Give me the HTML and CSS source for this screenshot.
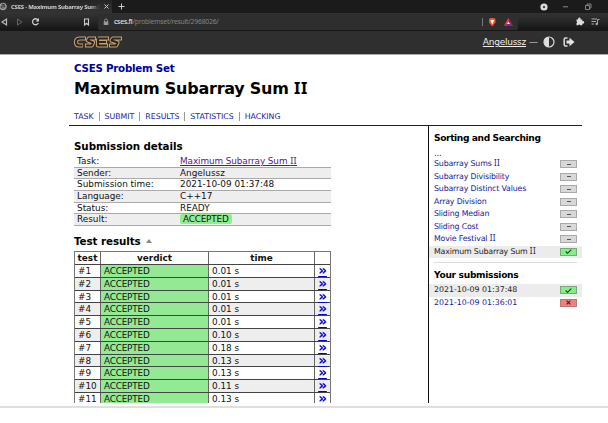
FILE: index.html
```
<!DOCTYPE html>
<html lang="en">
<head>
<meta charset="utf-8">
<title>CSES - Maximum Subarray Sum II</title>
<link rel="stylesheet" href="styles.css">
</head>
<body>
<div class="tabs">
  <div class="tab">
    <svg class="globe" width="8" height="9" viewBox="0 0 8 9"><circle cx="3" cy="4.5" r="3.3" fill="#777" stroke="#aaa"/><path d="M1 6L3 3.500L5 5M2 2L5 3" stroke="#333" fill="none"/></svg>
    <span class="tab-title">CSES - Maximum Subarray Sum I</span>
    <svg width="5" height="5" viewBox="0 0 5 5"><path d="M.5 .5L4.500 4.500M4.500 .5L.5 4.500" stroke="#ccc"/></svg>
  </div>
  <svg class="plus" width="7" height="7" viewBox="0 0 7 7"><path d="M3.500 .5V6.500M.5 3.500H6.500" stroke="#ccc"/></svg>
  <svg class="window" width="72" height="12" viewBox="0 0 72 12"><circle cx="8" cy="6" r="3.600" fill="#ddd"/><circle cx="8" cy="6" r="1.200" fill="#444"/><path d="M27 5.800H32" stroke="#888"/><path d="M49.500 4.500H53.500V8.500H49.500ZM51 4.500V3H55V7H53.500" fill="none" stroke="#999" stroke-width=".8"/></svg>
</div>
<div class="toolbar">
  <svg class="navicons" width="98" height="18" viewBox="0 0 98 18"><path d="M6.500 6V12L2 9Z" fill="none" stroke="#bbb" stroke-width="1.200"/><path d="M17.500 6V12L22 9Z" fill="none" stroke="#666"/><path d="M38 7A3 3 0 1 0 38.300 10" fill="none" stroke="#ccc" stroke-width="1.300"/><path d="M39 5V8.500H35.500Z" fill="#ccc"/><path d="M84.500 6H88.500V12L86.500 10.300L84.500 12Z" fill="none" stroke="#ccc" stroke-width="1.100"/></svg>
  <div class="address">
    <svg width="6" height="8" viewBox="0 0 6 8"><path d="M1.500 4V2.500A1.500 1.500 0 0 1 4.500 2.500V4" stroke="#888" fill="none"/><path d="M.7 3.500H5.300V7H.7Z" fill="#999"/></svg>
    <span class="url"><b>cses.fi</b>/problemset/result/2968026/</span>
    <svg class="shields" width="36" height="16" viewBox="0 0 36 16"><path d="M.500 4V12" stroke="#777"/><path d="M7 5L8.500 4H12L13.500 5V8.500L10.200 12.500L7 8.500Z" fill="#f05423"/><path d="M8.300 6.300L10.200 5.800L12.200 6.300L10.200 10.500Z" fill="#fff"/><path d="M26.500 4L31 12H22Z" fill="#b71b65"/><path d="M26.500 4V9L22 12Z" fill="#ff4724"/><path d="M22 12L26.500 9L31 12Z" fill="#68358e"/><path d="M26.500 8L28 10H25Z" fill="#fff"/></svg>
  </div>
  <svg class="exts" width="36" height="18" viewBox="0 0 36 18"><path d="M4.500 6.500H6.200A1.300 1.300 0 1 1 8.500 6.500H10.300V8.200A1.300 1.300 0 1 1 10.300 10.500V12.200H8.300A1.100 1.100 0 0 0 6.200 12.200H4.500V10.300A1.100 1.100 0 0 0 4.500 8.300Z" fill="#ddd"/><path d="M19.500 6H25M19.500 8.500H24M19.500 11H22" stroke="#aaa"/><path d="M25.500 11V6.500H27.500" stroke="#aaa" fill="none"/><circle cx="24.700" cy="11" r="1.200" fill="#aaa"/></svg>
</div>
<header class="site">
  <svg class="logo" width="50" height="14" viewBox="0 0 50 14"><g fill="none" stroke-linejoin="round"><g stroke="#c9a070" stroke-width="4.200"><path d="M13 3.500H7Q3 3.500 3 7Q3 10.500 6 10.500H10"/><path d="M23 3.500H16L15 5.500L20 7.500L18.500 10.500H12"/><path d="M36 3.500H25M34 7H25.500M35 10.500H25V3.500"/><path d="M49 3.500H40L38.500 5.500L44.500 7.500L43 10.500H36"/></g><g stroke="#2a2622" stroke-width="2.100"><path d="M12 3.500H7Q3 3.500 3 7Q3 10.500 6 10.500H9.500"/><path d="M22 3.500H16L15 5.500L20 7.500L18.500 10.500H13"/><path d="M35 3.500H25M33 7H25.500M34 10.500H25V3.500"/><path d="M48 3.500H40L38.500 5.500L44.500 7.500L43 10.500H37"/></g></g></svg>
  <div class="account"><a class="user">Angelussz</a><span class="dash">—</span>
    <svg width="12" height="12" viewBox="0 0 12 12"><circle cx="6" cy="6" r="5" fill="none" stroke="#ddd" stroke-width="1.200"/><path d="M6 1A5 5 0 0 0 6 11Z" fill="#ddd"/></svg>
    <svg class="exit" width="12" height="12" viewBox="0 0 12 12"><path d="M4.500 2H2.500Q1.200 2 1.200 3.500V8.500Q1.200 10 2.500 10H4.500" fill="none" stroke="#ddd" stroke-width="1.500"/><path d="M3.500 4.500H6.500V1.700L11.500 6L6.500 10.300V7.500H3.500Z" fill="#e4e4e4"/></svg>
  </div>
</header>
<div class="page">
  <div class="titles">
    <div class="set">CSES Problem Set</div>
    <h1>Maximum Subarray Sum <span class="numeral">II</span></h1>
    <nav><a>TASK</a><a>SUBMIT</a><a>RESULTS</a><a>STATISTICS</a><a>HACKING</a></nav>
  </div>
  <div class="columns">
    <main>
      <h2>Submission details</h2>
      <dl class="details">
        <dt>Task:</dt><dd><a class="visited">Maximum Subarray Sum <span class="numeral">II</span></a></dd>
        <dt>Sender:</dt><dd>Angelussz</dd>
        <dt>Submission time:</dt><dd>2021-10-09 01:37:48</dd>
        <dt>Language:</dt><dd>C++17</dd>
        <dt>Status:</dt><dd>READY</dd>
        <dt>Result:</dt><dd><span class="badge">ACCEPTED</span></dd>
      </dl>
      <h2 class="results-title">Test results <svg width="6" height="4" viewBox="0 0 6 4"><path d="M3 0L6 4H0Z" fill="#888"/></svg></h2>
      <div class="results">
        <div class="row head"><b>test</b><b>verdict</b><b>time</b><b></b></div>
        <div class="row"><span>#1</span><span class="ok">ACCEPTED</span><span>0.01 s</span><a>»</a></div>
        <div class="row"><span>#2</span><span class="ok">ACCEPTED</span><span>0.01 s</span><a>»</a></div>
        <div class="row"><span>#3</span><span class="ok">ACCEPTED</span><span>0.01 s</span><a>»</a></div>
        <div class="row"><span>#4</span><span class="ok">ACCEPTED</span><span>0.01 s</span><a>»</a></div>
        <div class="row"><span>#5</span><span class="ok">ACCEPTED</span><span>0.01 s</span><a>»</a></div>
        <div class="row"><span>#6</span><span class="ok">ACCEPTED</span><span>0.10 s</span><a>»</a></div>
        <div class="row"><span>#7</span><span class="ok">ACCEPTED</span><span>0.18 s</span><a>»</a></div>
        <div class="row"><span>#8</span><span class="ok">ACCEPTED</span><span>0.13 s</span><a>»</a></div>
        <div class="row"><span>#9</span><span class="ok">ACCEPTED</span><span>0.13 s</span><a>»</a></div>
        <div class="row"><span>#10</span><span class="ok">ACCEPTED</span><span>0.11 s</span><a>»</a></div>
        <div class="row"><span>#11</span><span class="ok">ACCEPTED</span><span>0.13 s</span><a>»</a></div>
      </div>
    </main>
    <aside>
      <h3>Sorting and Searching</h3>
      <div class="more">...</div>
      <div class="item"><a>Subarray Sums <span class="numeral">II</span></a><i class="mark"></i></div>
      <div class="item"><a>Subarray Divisibility</a><i class="mark"></i></div>
      <div class="item"><a>Subarray Distinct Values</a><i class="mark"></i></div>
      <div class="item"><a>Array Division</a><i class="mark"></i></div>
      <div class="item"><a>Sliding Median</a><i class="mark"></i></div>
      <div class="item"><a>Sliding Cost</a><i class="mark"></i></div>
      <div class="item"><a>Movie Festival <span class="numeral">II</span></a><i class="mark"></i></div>
      <div class="item current"><a>Maximum Subarray Sum <span class="numeral">II</span></a><i class="mark full"><svg width="7" height="5" viewBox="0 0 7 5"><path d="M.7 2.500L2.500 4.300L6.300 .6" fill="none" stroke="#174417" stroke-width="1.100"/></svg></i></div>
      <div class="rule"></div>
      <h3 class="yours">Your submissions</h3>
      <div class="item date current"><a>2021-10-09 01:37:48</a><i class="mark full"><svg width="7" height="5" viewBox="0 0 7 5"><path d="M.7 2.500L2.500 4.300L6.300 .6" fill="none" stroke="#174417" stroke-width="1.100"/></svg></i></div>
      <div class="item date"><a>2021-10-09 01:36:01</a><i class="mark zero"><svg width="5" height="5" viewBox="0 0 5 5"><path d="M.6 .6L4.400 4.400M4.400 .6L.6 4.400" stroke="#5c1515" stroke-width="1.100"/></svg></i></div>
    </aside>
  </div>
</div>
<div class="frame-edge"></div>
</body>
</html>
```
FILE: styles.css
```
* { box-sizing: border-box; }
body { margin: 0; width: 608px; height: 423px; overflow: hidden; background: #fff; color: #111; font-family: "DejaVu Sans", Verdana, sans-serif; font-size: 8.9px; }
svg { display: block; flex: none; }
a { color: #1a1a9c; }
.numeral { font-family: "Noto Sans", sans-serif; font-size: 1.02em; line-height: 1; letter-spacing: .04em; }
.tabs { display: flex; align-items: center; height: 13px; background: #1b1b1b; }
.tab { display: flex; align-items: center; width: 112px; height: 13px; background: linear-gradient(#252525, #333); }
.tab-title { width: 89px; margin: 0 4px 0 3px; white-space: nowrap; font: bold 6px/12px "Noto Sans", sans-serif; letter-spacing: -.24px; color: #d0d0d0; mask-image: linear-gradient(90deg, #000 90%, transparent); }
.plus { margin-left: 6px; }
.window { margin-left: auto; }
.toolbar { display: flex; align-items: center; height: 18px; background: linear-gradient(#333, #232323 60%, #151515); border-bottom: 1px solid #161616; }
.address { display: flex; align-items: center; width: 420px; height: 16px; padding-left: 5px; background: #2e2e2e; border-radius: 2px; }
.url { margin-left: 5px; font: 6.8px/14px "Noto Sans", sans-serif; letter-spacing: -.22px; color: #858585; }
.url b { font-weight: 500; color: #e4e4e4; }
.shields { margin-left: auto; }
.exts { margin-left: 54px; }
.site { display: flex; justify-content: space-between; height: 24px; padding: 4px 33px 0 73px; background: #2f2f2f; border-bottom: 1px solid #aaa; }
.account { display: flex; align-items: center; height: 14px; color: #e4e4e4; font-size: 9px; }
.user { color: #eee; text-decoration: underline; text-underline-offset: 1px; letter-spacing: -.25px; }
.dash { margin: 0 5px 0 3px; }
.exit { margin-left: 8px; }
.page { height: 348px; padding: 0 26px 0 69px; overflow: hidden; }
.titles { height: 71px; padding: 6px 0 0 5px; border-bottom: 1px solid #222; }
.set { font-weight: bold; font-size: 10.3px; line-height: 14px; letter-spacing: -.25px; color: #00009c; }
h1 { margin: 3px 0 0; font-size: 16px; line-height: 22px; letter-spacing: -.25px; color: #000; white-space: nowrap; }
nav { display: flex; margin-top: 12px; font-size: 7.8px; line-height: 9px; }
nav a + a { margin-left: 5px; padding-left: 5px; border-left: 1px solid #999; }
.columns { display: flex; justify-content: space-between; height: 277px; }
main { width: 262px; padding-left: 5px; }
h2 { display: flex; align-items: center; gap: 5px; margin: 13px 0 3px; font-size: 10.3px; line-height: 14px; letter-spacing: -.06px; color: #000; }
.details { display: grid; grid-template-columns: 103px 154px; grid-auto-rows: 11.7px; margin: 0; line-height: 11.4px; }
dt, dd { margin: 0; padding-left: 3px; border-bottom: 1px solid #aaa; white-space: nowrap; }
dt:nth-of-type(even), dd:nth-of-type(even) { background: #eee; }
.visited { color: #551a8b; text-decoration: underline; text-underline-offset: 1px; letter-spacing: -.1px; }
.badge { display: inline-block; width: 52px; height: 10px; line-height: 10px; padding: 0 3px; border-radius: 2px; letter-spacing: -.2px; background: #90ee90; }
.results-title { margin: 8px 0 3px; }
.results { width: 257px; border: 1px solid #777; border-bottom: 0; }
.row { display: grid; grid-template-columns: 26px 108px 106px 15px; grid-template-rows: 100%; height: 12.8px; line-height: 12px; border-bottom: 1px solid #444; }
.row > * { padding-left: 3px; border-right: 1px solid #666; }
.row > :last-child { padding: 0; border: 0; text-align: center; }
.row:nth-child(odd) { background: #eee; }
.row.head { background: #fff; text-align: center; }
.row.head > * { padding: 0; }
.row a { color: #00d; font-weight: bold; font-size: 13.5px; line-height: 10px; text-decoration: underline; text-underline-offset: 1px; text-decoration-thickness: 1px; }
.row .ok { background: #94e994; letter-spacing: -.2px; }
aside { width: 154px; border-left: 1px solid #111; }
h3 { margin: 5px 0 0 5px; font-size: 9.1px; line-height: 15px; letter-spacing: -.38px; color: #000; }
.more { height: 12px; margin-left: 5px; font-size: 8px; line-height: 15px; }
.item { display: flex; align-items: center; justify-content: space-between; height: 12.5px; padding: 0 5px; font-size: 7.85px; line-height: 10px; letter-spacing: -.16px; white-space: nowrap; }
.date { letter-spacing: 0; }
.current { background: #ececec; }
.current a { color: #222; }
.mark { display: flex; align-items: center; justify-content: center; width: 17px; height: 8px; border: 1px solid #aaa; background: #d8d8d8; }
.mark:empty::before { content: ""; width: 4px; height: 1px; background: #555; }
.mark.full { background: #85ee85; border-color: #79a879; }
.mark.zero { background: #f08080; border-color: #b87878; }
.rule { height: 1px; margin: 4px 5px 0; background: #ddd; }
.yours { margin: 4px 0 1px 5px; line-height: 16px; letter-spacing: -.3px; }
.frame-edge { height: 2px; margin-top: 3px; background: #dfdfdf; }
```
